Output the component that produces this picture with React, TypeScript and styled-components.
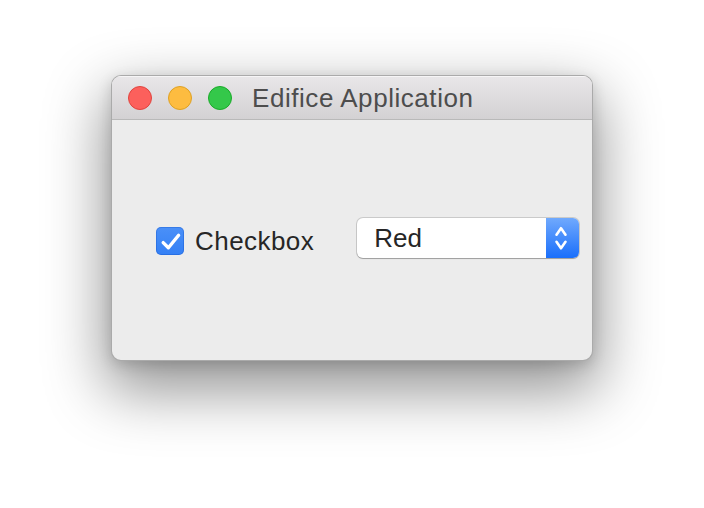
import React from "react";
import styled, { createGlobalStyle } from "styled-components";

const Global = createGlobalStyle`
  html, body { margin: 0; padding: 0; background: #ffffff; }
  body { font-family: "Liberation Sans", Arial, sans-serif; }
`;

const Stage = styled.div`
  width: 704px;
  height: 508px;
  box-sizing: border-box;
  padding: 75px 0 0 111px;
`;

const Window = styled.div`
  width: 482px;
  height: 286px;
  box-sizing: border-box;
  border-radius: 10px;
  border: 1px solid rgba(0, 0, 0, 0.28);
  background: #ececec;
  overflow: hidden;
  display: flex;
  flex-direction: column;
  box-shadow: 0 24px 60px 6px rgba(0, 0, 0, 0.42), 0 4px 14px rgba(0, 0, 0, 0.15);
`;

const TitleBar = styled.div`
  height: 43px;
  flex: none;
  display: flex;
  align-items: center;
  padding-left: 16px;
  background: linear-gradient(#e9e7e9, #d3d1d3);
  border-bottom: 1px solid #b9b9b9;
  box-shadow: inset 0 1px 0 rgba(255, 255, 255, 0.6);
`;

const Lights = styled.div`
  display: flex;
  gap: 16px;
  margin-right: 20px;
`;

const Light = styled.div<{ $fill: string; $edge: string }>`
  width: 24px;
  height: 24px;
  border-radius: 50%;
  box-sizing: border-box;
  background: ${(p) => p.$fill};
  border: 1px solid ${(p) => p.$edge};
`;

const Title = styled.div`
  font-size: 26px;
  letter-spacing: 0.55px;
  color: #4d4d4d;
  line-height: 1;
  margin-top: 1px;
`;

const Content = styled.div`
  flex: 1;
  display: flex;
  align-items: center;
  padding-left: 44px;
`;

const CheckRow = styled.label`
  display: flex;
  align-items: center;
  gap: 11px;
  margin-top: 2px;
`;

const Box = styled.div`
  width: 28px;
  height: 28px;
  border-radius: 5px;
  background: linear-gradient(#4a90f8, #3480f5);
  display: flex;
  align-items: center;
  justify-content: center;
  box-shadow: inset 0 0 0 1px rgba(0, 60, 180, 0.25);
`;

const Label = styled.span`
  font-size: 26px;
  color: #262626;
  letter-spacing: 0.45px;
  line-height: 1;
`;

const Popup = styled.div`
  margin-left: 43px;
  width: 222px;
  height: 40px;
  margin-bottom: 5px;
  display: flex;
  border-radius: 6px;
  background: #ffffff;
  overflow: hidden;
  box-shadow: 0 0 0 1px rgba(0, 0, 0, 0.14), 0 1px 1px rgba(0, 0, 0, 0.22);
`;

const PopupText = styled.div`
  flex: 1;
  display: flex;
  align-items: center;
  padding-left: 17px;
  font-size: 26px;
  color: #262626;
  line-height: 1;
`;

const Stepper = styled.div`
  width: 33px;
  background: linear-gradient(#70a9fd, #1a6ffb);
  display: flex;
  align-items: center;
  justify-content: center;
`;

export default function App() {
  return (
    <>
      <Global />
      <Stage>
        <Window>
          <TitleBar>
            <Lights>
              <Light $fill="#fc605c" $edge="#e0443e" />
              <Light $fill="#fdbc40" $edge="#dea123" />
              <Light $fill="#34c84a" $edge="#1aab29" />
            </Lights>
            <Title>Edifice Application</Title>
          </TitleBar>
          <Content>
            <CheckRow>
              <Box>
                <svg width="28" height="28" viewBox="0 0 28 28">
                  <path
                    d="M7.2 15.6 L12.4 20.8 L22.6 8.2"
                    fill="none"
                    stroke="#fff"
                    strokeWidth="3.4"
                    strokeLinecap="round"
                    strokeLinejoin="round"
                  />
                </svg>
              </Box>
              <Label>Checkbox</Label>
            </CheckRow>
            <Popup>
              <PopupText>Red</PopupText>
              <Stepper>
                <svg width="33" height="40" viewBox="0 0 33 40">
                  <path
                    d="M10.5 16.7 L15 10.2 L19.5 16.7 M10.5 23.8 L15 30.3 L19.5 23.8"
                    fill="none"
                    stroke="#fff"
                    strokeWidth="2.6"
                    strokeLinecap="round"
                    strokeLinejoin="round"
                  />
                </svg>
              </Stepper>
            </Popup>
          </Content>
        </Window>
      </Stage>
    </>
  );
}
